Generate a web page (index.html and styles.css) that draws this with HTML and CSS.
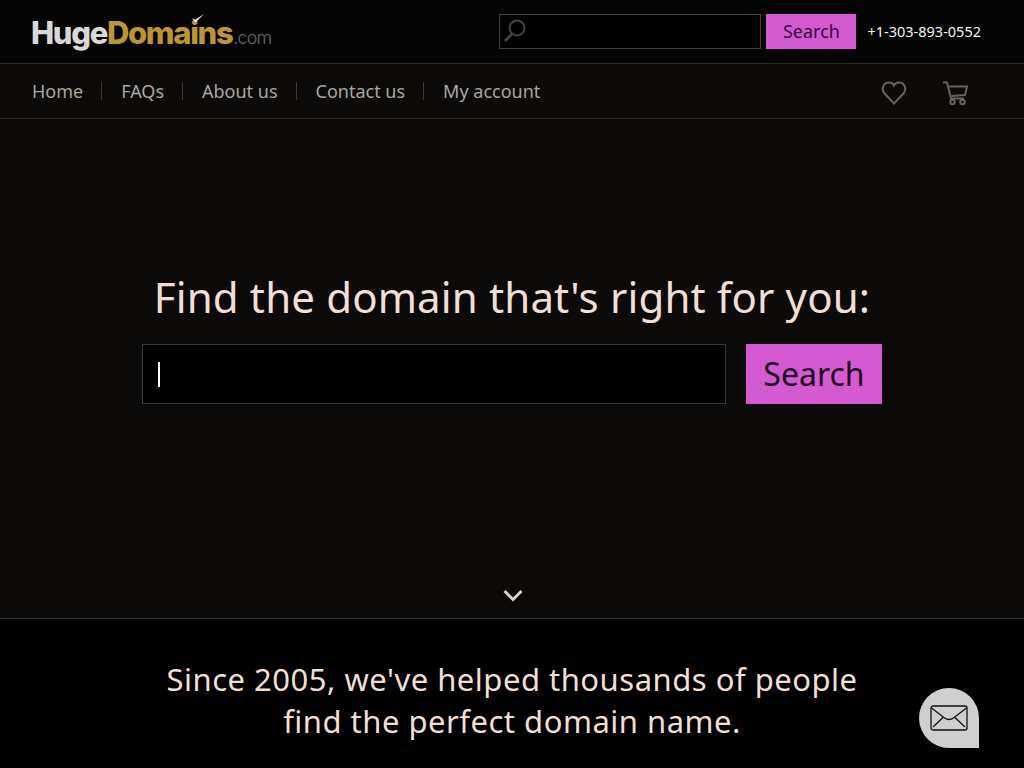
FILE: index.html
```html
<!DOCTYPE html>
<html>
<head>
  <title>HugeDomains</title>
  <link rel="stylesheet" href="styles.css">
</head>
<body>
  <!-- top bar -->
  <header class="top-bar">
    <a class="logo">
      <span class="logo-huge">Huge</span><span class="logo-domains">Doma<span class="logo-i">i<svg class="logo-check" width="14" height="11" viewBox="0 0 14 11"><path d="M1 5.500l3.500 4L13 1 4.500 6.500z" fill="#e8e8e8"/></svg></span>ns</span><span class="logo-com">.com</span>
    </a>
    <div class="top-search">
      <div class="top-input">
        <svg width="26" height="28" viewBox="0 0 26 28" fill="none" stroke="#434341" stroke-width="2"><circle cx="15" cy="11" r="7.500"/><path d="M10 17l-7 7" stroke-width="3"/></svg>
      </div>
      <button class="top-button">Search</button>
    </div>
    <span class="phone">+1-303-893-0552</span>
  </header>

  <!-- nav -->
  <nav class="main-nav">
    <ul class="nav-links">
      <li>Home</li>
      <li>FAQs</li>
      <li>About us</li>
      <li>Contact us</li>
      <li>My account</li>
    </ul>
    <div class="nav-icons">
      <svg width="26" height="26" viewBox="0 0 26 26" fill="none" stroke="#65635f" stroke-width="2"><path d="M13 23.500L3.500 13.500C-.5 8.500 3 2.500 8 2.500c2.500 0 4 1 5 3 1-2 2.500-3 5-3 5 0 8.500 6 4.500 11z"/></svg>
      <svg class="cart-icon" width="26" height="26" viewBox="0 0 26 26" fill="none" stroke="#65635f" stroke-width="2"><path d="M1 2.500h4l4 16h13"/><path d="M6.500 6.500h18.500l-2 8.500-13.500 1"/><circle cx="10.500" cy="22" r="2.200"/><circle cx="20.500" cy="22" r="2.200"/></svg>
    </div>
  </nav>

  <!-- hero search -->
  <section class="hero">
    <h1 class="hero-title">Find the domain that's right for you:</h1>
    <div class="hero-search">
      <div class="hero-input"><span class="caret"></span></div>
      <button class="hero-button">Search</button>
    </div>
    <svg class="hero-arrow" width="20" height="14" viewBox="0 0 20 14" fill="none" stroke="#dcd3ca" stroke-width="3"><path d="M1.500 3l8.500 8.500 8.500-8.500"/></svg>
  </section>

  <section class="since">
    <p class="since-text">Since 2005, we've helped thousands of people<br>find the perfect domain name.</p>
  </section>

  <!-- contact bubble -->
  <div class="mail-bubble">
    <svg width="38" height="26" viewBox="0 0 38 26" fill="none" stroke="#111" stroke-width="1.300"><rect x="1" y="1" width="36" height="24" rx="2"/><path d="M1.500 3l13 10c3 2 6 2 9 0l13-10"/><path d="M3 22l10-9.500M35 22l-10-9.500"/></svg>
  </div>
</body>
</html>
```

FILE: styles.css
```css
* { box-sizing: border-box; }

html, body {
  height: 100%;
  overflow: hidden;
}
body {
  margin: 0;
  font-family: "Noto Sans", "Open Sans", sans-serif;
  background-color: #000;
  color: #f0dfd2;
}

/* Top bar */
.top-bar {
  display: flex;
  align-items: center;
  height: 64px;
  padding: 0 43px 1px 31px;
  background-color: #050505;
  border-bottom: 1px solid #2c2a27;
}
.logo {
  display: flex;
  align-items: baseline;
  font-family: "Inter", sans-serif;
  font-weight: 800;
  font-size: 31px;
  letter-spacing: -1.350px;
  margin-right: auto;
  padding-top: 3px;
}
.logo-huge { color: #d8d8d8; }
.logo-domains { color: #bb9637; }
.logo-i { position: relative; }
.logo-check {
  position: absolute;
  left: 1px;
  top: -1px;
}
.logo-com {
  color: #6a6a68;
  font-weight: 300;
  font-size: 18px;
  letter-spacing: -.9px;
  margin-left: 1px;
}
.top-search {
  display: flex;
  gap: 5px;
  margin-right: 11px;
}
.top-input {
  display: flex;
  align-items: center;
  width: 262px;
  height: 35px;
  padding-left: 2px;
  background-color: #000;
  border: 1px solid #3f3f3d;
}
.top-button {
  width: 90px;
  height: 35px;
  padding: 0;
  border: none;
  font-family: inherit;
  font-size: 18px;
  color: #36093a;
  background-color: #d45ad2;
}
.phone {
  font-size: 14.500px;
  color: #f4f4f4;
}

/* Nav */
.main-nav {
  display: flex;
  align-items: center;
  justify-content: space-between;
  height: 55px;
  padding: 0 56px 0 32px;
  background-color: #0c0a08;
  border-bottom: 1px solid #2e2c2a;
}
.nav-links {
  display: flex;
  margin: 0;
  padding: 0;
  list-style: none;
  font-size: 18px;
  color: #aaa6a0;
}
.nav-links li {
  height: 18px;
  line-height: 18px;
  padding: 0 18px 0 19px;
  border-left: 1px solid #3c3a37;
}
.nav-links li:first-child {
  padding-left: 0;
  border-left: none;
}
.nav-icons {
  display: flex;
  gap: 35px;
  padding-top: 3px;
}

/* Hero */
.hero {
  position: relative;
  display: flex;
  flex-direction: column;
  align-items: center;
  height: 500px;
  padding-top: 147px;
  background-color: #0c0a08;
  border-bottom: 1px solid #2e2c2a;
}
.hero-title {
  margin: 0 0 17px;
  font-size: 42px;
  line-height: 61px;
  font-weight: normal;
  letter-spacing: .15px;
  color: #f0dfd2;
}
.hero-search {
  display: flex;
  gap: 20px;
}
.hero-input {
  display: flex;
  align-items: center;
  width: 584px;
  height: 60px;
  padding-left: 15px;
  background-color: #000;
  border: 1px solid #3a3a38;
}
.caret {
  width: 2px;
  height: 25px;
  background-color: #fff;
}
.hero-button {
  width: 136px;
  height: 60px;
  padding: 0 0 2px;
  border: none;
  font-family: inherit;
  font-size: 32px;
  color: #1d0a1e;
  background-color: #d45ad2;
}
.hero-arrow {
  position: absolute;
  left: 503px;
  bottom: 16px;
}

/* Since */
.since {
  padding-top: 39px;
  text-align: center;
}
.since-text {
  margin: 0;
  font-size: 31px;
  line-height: 42px;
  letter-spacing: .5px;
  color: #f0dfd2;
}

/* Contact bubble */
.mail-bubble {
  position: fixed;
  left: 919px;
  top: 688px;
  display: flex;
  align-items: center;
  justify-content: center;
  width: 60px;
  height: 60px;
  border-radius: 50% 50% 0 50%;
  background-color: #cfcfcd;
}
```
